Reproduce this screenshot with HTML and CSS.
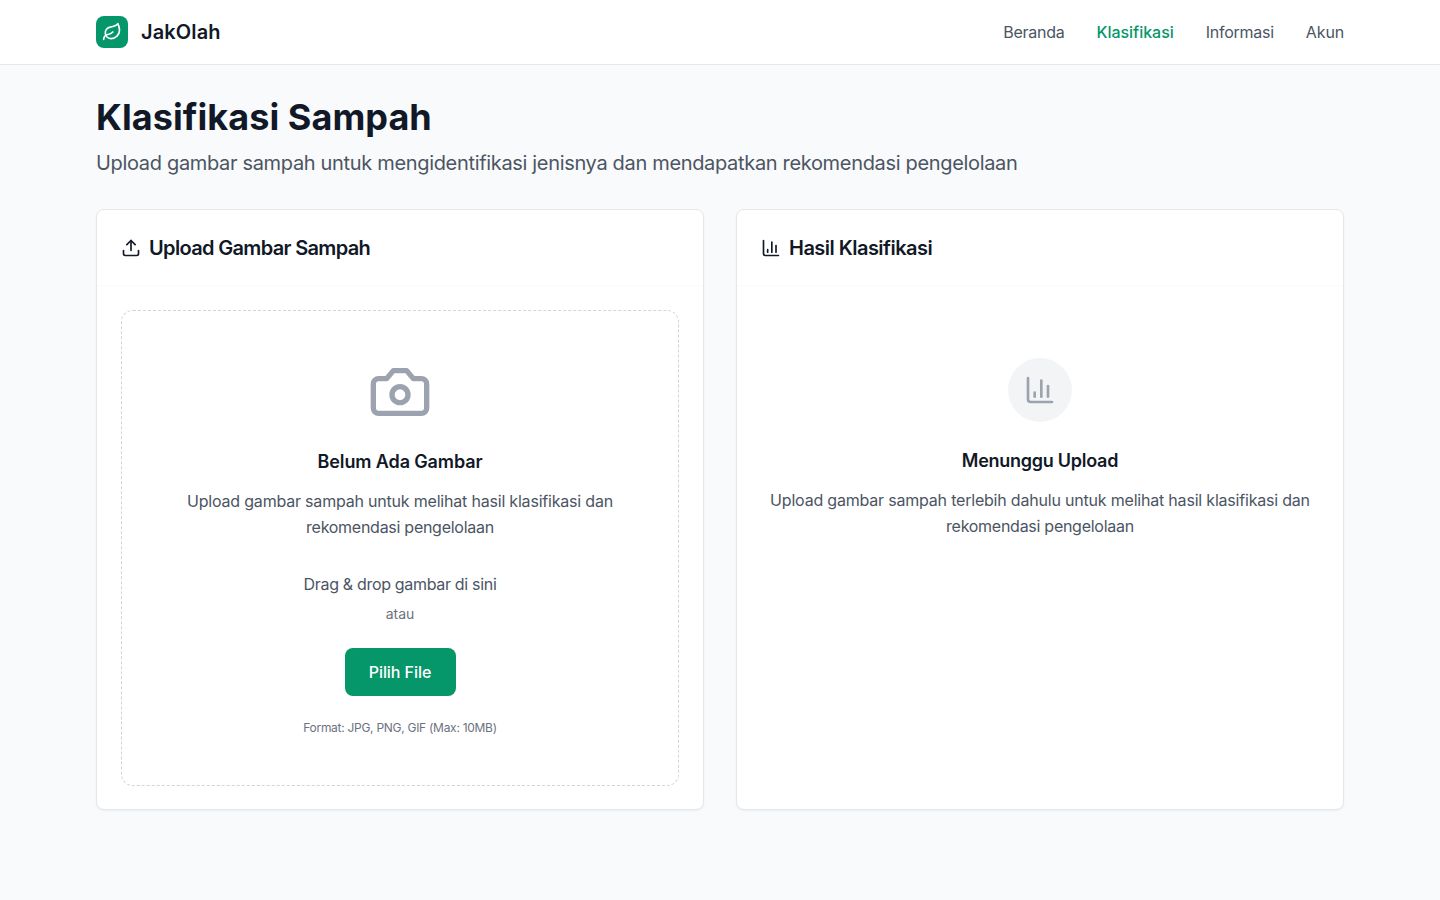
FILE: index.html
```html
<!DOCTYPE html>
<html lang="id">
<head>
<meta charset="utf-8">
<title>JakOlah - Klasifikasi Sampah</title>
<link rel="stylesheet" href="styles.css">
</head>
<body>
<header class="topbar">
  <div class="container topbar-inner">
    <a class="brand">
      <span class="brand-mark"><svg class="icon icon-20" viewBox="0 0 24 24"><path d="M11 20A7 7 0 0 1 9.8 6.1C15.5 5 17 4.48 19 2c1 2 2 4.18 2 8 0 5.5-4.78 10-10 10Z"/><path d="M2 21c0-3 1.85-5.36 5.08-6C9.5 14.52 12 13 13 12"/></svg></span>
      <span class="brand-name">JakOlah</span>
    </a>
    <nav class="nav">
      <a class="nav-link">Beranda</a>
      <a class="nav-link active">Klasifikasi</a>
      <a class="nav-link">Informasi</a>
      <a class="nav-link nav-last">Akun</a>
    </nav>
  </div>
</header>
<main class="container main">
  <h1 class="page-title">Klasifikasi Sampah</h1>
  <p class="page-lead">Upload gambar sampah untuk mengidentifikasi jenisnya dan mendapatkan rekomendasi pengelolaan</p>
  <div class="grid">
    <section class="card">
      <div class="card-head">
        <svg class="icon icon-20" viewBox="0 0 24 24"><path d="M12 3v12"/><path d="m17 8-5-5-5 5"/><path d="M21 15v4a2 2 0 0 1-2 2H5a2 2 0 0 1-2-2v-4"/></svg>
        <h2 class="card-title title-upload">Upload Gambar Sampah</h2>
      </div>
      <div class="card-body">
        <div class="dropzone">
          <svg class="icon icon-64" viewBox="0 0 24 24"><path d="M14.5 4h-5L7 7H4a2 2 0 0 0-2 2v9a2 2 0 0 0 2 2h16a2 2 0 0 0 2-2V9a2 2 0 0 0-2-2h-3l-2.5-3z"/><circle cx="12" cy="13" r="3"/></svg>
          <h3 class="state-title drop-title">Belum Ada Gambar</h3>
          <p class="state-text">Upload gambar sampah untuk melihat hasil klasifikasi dan<br><span class="state-line">rekomendasi pengelolaan</span></p>
          <p class="drag-text">Drag &amp; drop gambar di sini</p>
          <p class="or-text">atau</p>
          <button class="button">Pilih File</button>
          <p class="format-text">Format: JPG, PNG, GIF (Max: 10MB)</p>
        </div>
      </div>
    </section>
    <section class="card">
      <div class="card-head">
        <svg class="icon icon-20" viewBox="0 0 24 24"><path d="M3 3v16a2 2 0 0 0 2 2h16"/><path d="M18 17V9"/><path d="M13 17V5"/><path d="M8 17v-3"/></svg>
        <h2 class="card-title title-result">Hasil Klasifikasi</h2>
      </div>
      <div class="card-body">
        <div class="waiting">
          <span class="waiting-mark"><svg class="icon icon-32" viewBox="0 0 24 24"><path d="M3 3v16a2 2 0 0 0 2 2h16"/><path d="M18 17V9"/><path d="M13 17V5"/><path d="M8 17v-3"/></svg></span>
          <h3 class="state-title waiting-title">Menunggu Upload</h3>
          <p class="state-text">Upload gambar sampah terlebih dahulu untuk melihat hasil klasifikasi dan<br><span class="state-line">rekomendasi pengelolaan</span></p>
        </div>
      </div>
    </section>
  </div>
</main>
</body>
</html>
```
FILE: styles.css
```css
* { box-sizing: border-box; margin: 0; padding: 0; }
body { min-height: 100vh; background: #f9fafb; color: #111827; font-family: Inter, "Liberation Sans", sans-serif; font-size: 16px; }
.container { width: 1248px; margin: 0 auto; }
.icon { display: block; flex: none; fill: none; stroke: currentColor; stroke-width: 2; stroke-linecap: round; stroke-linejoin: round; }
.icon-20 { width: 20px; height: 20px; }
.icon-32 { width: 32px; height: 32px; }
.icon-64 { width: 64px; height: 64px; }

.topbar { height: 65px; background: #fff; border-bottom: 1px solid #e5e7eb; }
.topbar-inner { height: 64px; display: flex; align-items: center; justify-content: space-between; }
.brand { display: flex; align-items: center; gap: 13px; }
.brand-mark { width: 32px; height: 32px; border-radius: 8px; background: #059669; color: #fff; display: flex; align-items: center; justify-content: center; }
.brand-name { font-size: 20px; font-weight: 600; line-height: 28px; letter-spacing: .12px; }
.nav { display: flex; gap: 32px; line-height: 24px; color: #4b5563; white-space: nowrap; }
.nav-link { letter-spacing: -.25px; }
.nav-link.active { color: #059669; font-weight: 500; letter-spacing: -.03px; }
.nav-link.nav-last { letter-spacing: -.15px; }

.main { padding-top: 32px; }
.page-title { font-size: 36px; line-height: 40px; font-weight: 700; letter-spacing: .06px; }
.page-lead { margin-top: 12px; font-size: 20px; line-height: 28px; letter-spacing: -.33px; color: #4b5563; white-space: nowrap; }
.grid { margin-top: 32px; display: grid; grid-template-columns: 1fr 1fr; gap: 32px; }
.card { height: 601px; border: 1px solid #e5e7eb; border-radius: 8px; background: #fff; box-shadow: 0 1px 2px rgba(0, 0, 0, .05); }
.card-head { height: 76px; padding: 0 24px; display: flex; align-items: center; gap: 8px; border-bottom: 1px solid #f9fafb; }
.card-title { font-size: 20px; line-height: 28px; font-weight: 600; }
.title-upload { letter-spacing: -.66px; }
.title-result { letter-spacing: -.53px; }
.card-body { padding: 24px; }
.dropzone { height: 476px; padding-top: 49px; border: 1px dashed #d1d5db; border-radius: 12px; display: flex; flex-direction: column; align-items: center; text-align: center; }
.dropzone .icon { color: #9ca3af; }
.state-title { font-size: 18px; line-height: 28px; font-weight: 600; letter-spacing: -.12px; }
.drop-title { margin-top: 24px; }
.state-text { margin-top: 12px; line-height: 26px; letter-spacing: -.2px; color: #4b5563; white-space: nowrap; }
.state-line { letter-spacing: -.27px; }
.drag-text { margin-top: 31px; line-height: 26px; letter-spacing: -.32px; color: #4b5563; }
.or-text { margin-top: 7px; font-size: 14px; line-height: 20px; color: #6b7280; }
.button { margin-top: 24px; width: 111px; height: 48px; border: 0; border-radius: 8px; background: #059669; color: #fff; font: 500 16px/24px Inter, "Liberation Sans", sans-serif; letter-spacing: -.06px; white-space: nowrap; }
.format-text { margin-top: 24px; font-size: 12px; line-height: 16px; letter-spacing: -.28px; color: #6b7280; }
.waiting { padding-top: 48.4px; display: flex; flex-direction: column; align-items: center; text-align: center; }
.waiting-mark { width: 64px; height: 64px; border-radius: 50%; background: #f3f4f6; color: #9ca3af; display: flex; align-items: center; justify-content: center; }
.waiting-title { margin-top: 24.6px; letter-spacing: -.26px; }
```
